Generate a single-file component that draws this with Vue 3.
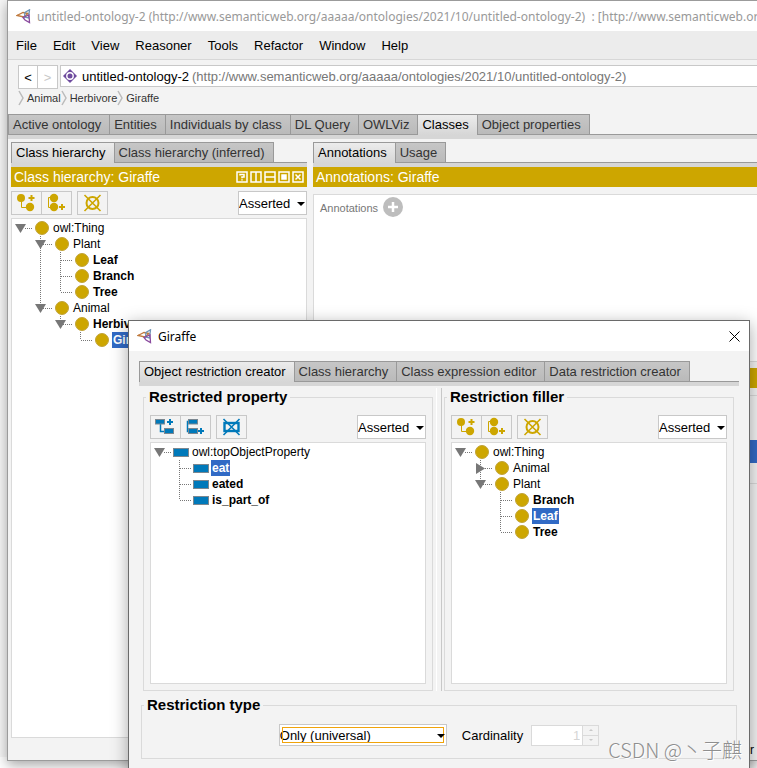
<template>
  <div class="desktop">
    <section class="window">
      <header class="title-bar inactive">
        <svg class="logo" viewBox="0 0 15 15">
          <path d="M1 6.5 L7 3.5 L12 4.5 L8 8 Z" stroke="#c07a3e" />
          <path d="M13.5 .8 L9 3.5 L8.5 8 L12.5 9 Z" stroke="#6c93b5" />
          <path d="M13.5 13.5 L13 6 L7 8.5 L9 11 Z" stroke="#8a4a9e" />
        </svg>
        <span>untitled-ontology-2 (http://www.semanticweb.org/aaaaa/ontologies/2021/10/untitled-ontology-2) &nbsp;: [http://www.semanticweb.org</span>
      </header>

      <nav class="menu-bar">
        <button v-for="item in menu" :key="item" type="button">{{ item }}</button>
      </nav>

      <div class="location">
        <div class="history">
          <button type="button" aria-label="Back">&lt;</button>
          <button type="button" aria-label="Forward" disabled>&gt;</button>
        </div>
        <div class="address">
          <svg width="14" height="14" viewBox="0 0 14 14">
            <path d="M7 0 L14 7 L7 14 L0 7 Z" fill="#6e4b9e" />
            <circle cx="7" cy="7" r="3.2" fill="none" stroke="#fff" stroke-width="1.4" />
          </svg>
          <span class="address-name">untitled-ontology-2</span>
          <span class="address-iri">(http://www.semanticweb.org/aaaaa/ontologies/2021/10/untitled-ontology-2)</span>
        </div>
      </div>

      <div class="crumbs">
        <a v-for="crumb in crumbs" :key="crumb" href="#">
          <svg width="7" height="16" viewBox="0 0 7 16"><path d="M1 1 L5 8 L1 15" /></svg>{{ crumb }}
        </a>
      </div>

      <div class="tab-strip">
        <div class="tabs" role="tablist">
          <button v-for="tab in mainTabs" :key="tab" type="button" role="tab" :class="{ active: tab === 'Classes' }">{{ tab }}</button>
        </div>
      </div>

      <main class="workspace">
        <section class="panel panel-left">
          <div class="tab-strip">
            <div class="tabs" role="tablist">
              <button type="button" role="tab" class="active">Class hierarchy</button>
              <button type="button" role="tab">Class hierarchy (inferred)</button>
            </div>
          </div>
          <h2 class="view-title">
            <span>Class hierarchy: Giraffe</span>
            <svg width="68" height="12" viewBox="0 0 68 12" fill="none" stroke="#fff" stroke-width="1.5">
              <path v-for="n in 5" :key="n" :d="`M${n * 14 - 13} 1 h10 v10 h-10 Z`" />
              <path d="M4 4.5 V3.5 H8 V6 H6 V7.2 M6 8.2 V9.5 M20 1 V11 M29 6 H39" />
              <rect x="46" y="4" width="4" height="4" fill="#fff" />
              <path d="M59.5 3.5 L64.5 8.5 M64.5 3.5 L59.5 8.5" />
            </svg>
          </h2>
          <div class="tools">
            <button v-for="tool in classTools" :key="tool.label" type="button" class="tool class-tool" :aria-label="tool.label">
              <svg width="29" height="22" viewBox="1 1 29 22" v-html="tool.icon"></svg>
            </button>
            <span class="combo combo-small">
              <select aria-label="Class hierarchy mode"><option>Asserted</option></select>
            </span>
          </div>
          <ul class="tree tree-main">
            <li v-for="(row, i) in classTree" :key="i">
              <svg v-for="(cell, c) in row.cells" :key="c" class="guide" width="20" height="16" viewBox="0 0 20 16">
                <path class="dots" :d="guides[cell]" />
                <path v-if="c === row.cells.length - 1 && row.handle" :d="handles[row.handle]" />
              </svg>
              <span class="node-icon class-icon"></span>
              <span class="label" :class="{ bold: row.bold, selected: row.selected }">{{ row.text }}</span>
            </li>
          </ul>
        </section>

        <section class="panel panel-right">
          <div class="tab-strip">
            <div class="tabs" role="tablist">
              <button type="button" role="tab" class="active">Annotations</button>
              <button type="button" role="tab">Usage</button>
            </div>
          </div>
          <h2 class="view-title">Annotations: Giraffe</h2>
          <div class="annotations">
            <span>Annotations</span>
            <button type="button" class="add" aria-label="Add annotation">
              <svg width="20" height="20" viewBox="0 0 20 20">
                <circle cx="10" cy="10" r="10" fill="#bdbdbd" />
                <path d="M10 5 V15 M5 10 H15" stroke="#fff" stroke-width="2.5" />
              </svg>
            </button>
          </div>
          <div class="view-title description-title"></div>
          <div class="description"><div class="description-row"></div></div>
        </section>
      </main>
      <footer class="status">r</footer>
    </section>

    <section class="dialog" role="dialog" aria-labelledby="dialog-title">
      <header class="title-bar">
        <svg class="logo" viewBox="0 0 15 15">
          <path d="M1 6.5 L7 3.5 L12 4.5 L8 8 Z" stroke="#c07a3e" />
          <path d="M13.5 .8 L9 3.5 L8.5 8 L12.5 9 Z" stroke="#6c93b5" />
          <path d="M13.5 13.5 L13 6 L7 8.5 L9 11 Z" stroke="#8a4a9e" />
        </svg>
        <span id="dialog-title">Giraffe</span>
        <button type="button" class="close" aria-label="Close">
          <svg width="11" height="11" viewBox="0 0 11 11"><path d="M.5 .5 L10.5 10.5 M10.5 .5 L.5 10.5" /></svg>
        </button>
      </header>

      <div class="dialog-body">
        <div class="tab-strip">
          <div class="tabs" role="tablist">
            <button v-for="(tab, i) in dialogTabs" :key="tab" type="button" role="tab" :class="{ active: i === 0 }">{{ tab }}</button>
          </div>
        </div>

        <div class="split">
          <fieldset v-for="pane in panes" :key="pane.title" class="group pane">
            <legend>{{ pane.title }}</legend>
            <div class="tools">
              <button v-for="tool in pane.tools" :key="tool.label" type="button" class="tool" :class="pane.kind + '-tool'" :aria-label="tool.label">
                <svg width="29" height="22" viewBox="1 1 29 22" v-html="tool.icon"></svg>
              </button>
              <span class="combo combo-small">
                <select :aria-label="pane.title + ' mode'"><option>Asserted</option></select>
              </span>
            </div>
            <ul class="tree">
              <li v-for="(row, i) in pane.tree" :key="i">
                <svg v-for="(cell, c) in row.cells" :key="c" class="guide" width="20" height="16" viewBox="0 0 20 16">
                  <path class="dots" :d="guides[cell]" />
                  <path v-if="c === row.cells.length - 1 && row.handle" :d="handles[row.handle]" />
                </svg>
                <span class="node-icon" :class="pane.kind + '-icon'"></span>
                <span class="label" :class="{ bold: row.bold, selected: row.selected }">{{ row.text }}</span>
              </li>
            </ul>
          </fieldset>
        </div>

        <fieldset class="group type-group">
          <legend>Restriction type</legend>
          <div class="type-row">
            <span class="combo combo-focus">
              <select aria-label="Restriction type"><option>Only (universal)</option></select>
            </span>
            <label for="cardinality">Cardinality</label>
            <span class="spinner">
              <input id="cardinality" type="text" value="1" disabled />
              <span class="spinner-buttons">
                <button type="button" aria-label="Increase" disabled>
                  <svg width="4" height="2" viewBox="0 0 4 2"><path d="M0 2 L2 0 L4 2 Z" /></svg>
                </button>
                <button type="button" aria-label="Decrease" disabled>
                  <svg width="4" height="2" viewBox="0 0 4 2"><path d="M0 0 L2 2 L4 0 Z" /></svg>
                </button>
              </span>
            </span>
          </div>
        </fieldset>
      </div>
    </section>

    <div class="watermark">CSDN @丶子麒</div>
  </div>
</template>

<script setup>
const menu = ["File", "Edit", "View", "Reasoner", "Tools", "Refactor", "Window", "Help"];
const crumbs = ["Animal", "Herbivore", "Giraffe"];
const mainTabs = ["Active ontology", "Entities", "Individuals by class", "DL Query", "OWLViz", "Classes", "Object properties"];
const dialogTabs = ["Object restriction creator", "Class hierarchy", "Class expression editor", "Data restriction creator"];

// dotted connector shapes, one per 20px tree column
const guides = {
  blank: "",
  root: "M13 8.5 H20",
  line: "M8.5 0 V16",
  tee: "M8.5 0 V16 M9 8.5 H20",
  elbow: "M8.5 0 V8 M9 8.5 H20"
};

const handles = {
  open: "M3 4 H14 L8.5 13 Z",
  closed: "M4 3 L13 8.5 L4 14 Z"
};

const classTree = [
  { text: "owl:Thing", cells: ["root"], handle: "open" },
  { text: "Plant", cells: ["blank", "tee"], handle: "open" },
  { text: "Leaf", cells: ["blank", "line", "tee"], bold: true },
  { text: "Branch", cells: ["blank", "line", "tee"], bold: true },
  { text: "Tree", cells: ["blank", "line", "elbow"], bold: true },
  { text: "Animal", cells: ["blank", "elbow"], handle: "open" },
  { text: "Herbivore", cells: ["blank", "blank", "elbow"], handle: "open", bold: true },
  { text: "Giraffe", cells: ["blank", "blank", "blank", "elbow"], bold: true, selected: true }
];

const propertyTree = [
  { text: "owl:topObjectProperty", cells: ["root"], handle: "open" },
  { text: "eat", cells: ["blank", "tee"], bold: true, selected: true },
  { text: "eated", cells: ["blank", "tee"], bold: true },
  { text: "is_part_of", cells: ["blank", "elbow"], bold: true }
];

const fillerTree = [
  { text: "owl:Thing", cells: ["root"], handle: "open" },
  { text: "Animal", cells: ["blank", "tee"], handle: "closed" },
  { text: "Plant", cells: ["blank", "elbow"], handle: "open" },
  { text: "Branch", cells: ["blank", "blank", "tee"], bold: true },
  { text: "Leaf", cells: ["blank", "blank", "tee"], bold: true, selected: true },
  { text: "Tree", cells: ["blank", "blank", "elbow"], bold: true }
];

const classTools = [
  {
    label: "Add subclass",
    icon: `<path d="M10.5 7 V16.5 H18" fill="none" stroke="currentColor" />
      <circle cx="10" cy="7" r="4" /><circle cx="19" cy="16" r="4.2" />
      <path d="M20.5 4 V10 M17.5 7 H23.5" stroke="currentColor" stroke-width="2" />`
  },
  {
    label: "Add sibling class",
    icon: `<path d="M13 6.5 H7.5 V16.5 H13" fill="none" stroke="currentColor" />
      <circle cx="13" cy="7" r="4.2" /><circle cx="13" cy="16" r="4.2" />
      <path d="M21 13 V19 M18 16 H24" stroke="currentColor" stroke-width="2" />`
  },
  {
    label: "Delete class",
    icon: `<circle cx="15.5" cy="12" r="6" fill="none" stroke="currentColor" stroke-width="2" />
      <path d="M7.5 4 L23.5 20 M23.5 4 L7.5 20" stroke="currentColor" stroke-width="1.6" />`
  }
];

const propertyTools = [
  {
    label: "Add sub property",
    icon: `<path d="M10.5 9 V16.5 H14" fill="none" stroke="currentColor" stroke-width="1.5" />
      <rect x="5.5" y="4.5" width="9" height="4.5" stroke="#7b8790" /><rect x="14.5" y="13.5" width="9" height="5" stroke="#7b8790" />
      <path d="M20 4 V10 M17 7 H23" stroke="currentColor" stroke-width="2" />`
  },
  {
    label: "Add sibling property",
    icon: `<path d="M9 6.5 H7.5 V16.5 H9" fill="none" stroke="currentColor" stroke-width="1.5" />
      <rect x="8.5" y="4.5" width="9" height="4.5" stroke="#7b8790" /><rect x="8.5" y="13.5" width="9" height="5" stroke="#7b8790" />
      <path d="M21 13 V19 M18 16 H24" stroke="currentColor" stroke-width="2" />`
  },
  {
    label: "Delete property",
    icon: `<rect x="8.5" y="8" width="14" height="8" fill="none" stroke="currentColor" stroke-width="2.4" />
      <path d="M7.5 4 L23.5 20 M23.5 4 L7.5 20" stroke="currentColor" stroke-width="1.6" />`
  }
];

const panes = [
  { title: "Restricted property", kind: "property", tools: propertyTools, tree: propertyTree },
  { title: "Restriction filler", kind: "class", tools: classTools, tree: fillerTree }
];
</script>

<style>
body {
  margin: 0;
}
</style>

<style scoped>
.desktop {
  position: relative;
  box-sizing: border-box;
  height: 100vh;
  padding: 0 0 7px 7px;
  overflow: hidden;
  background: linear-gradient(#f6f6f6 calc(100% - 11px), #fff calc(100% - 11px));
  font-family: "Liberation Sans", Arial, "Noto Sans CJK SC", sans-serif;
  font-size: 13px;
  color: #000;
}

.desktop *,
.desktop *::before,
.desktop *::after {
  box-sizing: border-box;
}

button,
select,
input {
  margin: 0;
  padding: 0;
  border: 0;
  border-radius: 0;
  background: none;
  font: inherit;
  color: inherit;
}

.window {
  display: flex;
  flex-direction: column;
  height: 100%;
  border: 1px solid #9b9b9b;
  border-right: 0;
  background: #f3f3f3;
  box-shadow: 0 4px 12px rgba(0, 0, 0, 0.35);
}

.title-bar {
  display: flex;
  flex: none;
  align-items: center;
  height: 30px;
  padding: 0 9px 0 8px;
  background: #fff;
  font-family: "Noto Sans", "Open Sans", sans-serif;
  font-size: 12px;
  white-space: nowrap;
  overflow: hidden;
}

.title-bar.inactive {
  padding-right: 0;
  color: #999;
}

.logo {
  flex: none;
  width: 15px;
  height: 15px;
  margin-right: 6px;
  fill: none;
  stroke-width: 1.3;
}

.menu-bar {
  display: flex;
  flex: none;
  gap: 16px;
  height: 29px;
  padding-left: 8px;
  border-bottom: 1px solid #d7d7d7;
  background: #ececec;
}

.location {
  display: flex;
  align-items: flex-start;
  gap: 2px;
  padding: 5px 0 0 10px;
}

.history {
  display: flex;
}

.history button {
  width: 20px;
  height: 24px;
  border: 1px solid #c8c8c8;
  background: #fff;
}

.history button:disabled {
  color: #c8c8c8;
  border-left: 0;
}

.address {
  display: flex;
  flex: 1;
  align-items: center;
  height: 22px;
  padding-left: 2px;
  border: 1px solid #c8c8c8;
  border-right: 0;
  background: #fff;
  white-space: nowrap;
}

.address-name {
  margin: 0 3px 0 5px;
}

.address-iri {
  color: #777;
}

.crumbs {
  display: flex;
  height: 18px;
  margin-bottom: 7px;
  padding-left: 10px;
  font-size: 11px;
}

.crumbs a {
  display: flex;
  align-items: center;
  gap: 2px;
  color: #333;
  text-decoration: none;
}

.crumbs path {
  fill: none;
  stroke: #bbb;
  stroke-width: 1.5;
}

.tab-strip {
  flex: none;
  border-bottom: 4px solid #d6d6d6;
}

.tabs {
  display: flex;
  height: 21px;
  border-bottom: 1px solid #999;
}

.tabs button {
  height: 20px;
  padding: 0 8px 0 4px;
  border: 1px solid #999;
  border-width: 1px 0 0 1px;
  background: linear-gradient(#c6c6c6, #bababa);
  color: #333;
  white-space: nowrap;
}

.tabs button:last-child {
  border-right-width: 1px;
}

.tabs button.active {
  height: 21px;
  padding-bottom: 1px;
  background: linear-gradient(#ececec, #d6d6d6);
  color: #000;
}

.workspace {
  display: flex;
  flex: 1;
  gap: 6px;
  min-height: 0;
  padding: 3px 0 0 3px;
}

.panel {
  display: flex;
  flex-direction: column;
}

.panel-left {
  flex: none;
  width: 296px;
}

.panel-right {
  flex: 1;
  min-width: 0;
}

.view-title {
  display: flex;
  flex: none;
  align-items: center;
  justify-content: space-between;
  height: 20px;
  margin: 0;
  padding: 0 3px;
  background: #cda600;
  font-size: 14px;
  font-weight: normal;
  color: #fff;
}

.tools {
  display: flex;
  height: 24px;
  margin: 4px 0 3px;
}

.tool {
  display: flex;
  width: 31px;
  height: 24px;
  border: 1px solid #c8c8c8;
}

.tool + .tool {
  margin-left: -1px;
}

.tool:nth-child(3) {
  margin-left: 5px;
}

.class-tool {
  color: #cda600;
}

.property-tool {
  color: #0079ba;
}

.tool svg {
  fill: currentColor;
}

.combo {
  position: relative;
  height: 24px;
}

.combo select {
  width: 100%;
  height: 100%;
  border: 1px solid #c8c8c8;
  background: #fff;
  appearance: none;
}

.combo::after {
  content: "";
  position: absolute;
  top: 50%;
  right: 2px;
  border: 4px solid transparent;
  border-top-color: #000;
  border-bottom: 0;
  margin-top: -1px;
  pointer-events: none;
}

.combo-small {
  width: 69px;
  margin-left: auto;
}

.tree {
  margin: 0;
  padding: 1px 0;
  border: 1px solid #dadada;
  background: #fff;
  font-size: 12px;
  line-height: 16px;
  list-style: none;
}

.tree-main {
  flex: 1;
}

.tree li {
  display: flex;
  align-items: center;
  height: 16px;
}

.guide {
  flex: none;
  fill: #777;
}

.dots {
  fill: none;
  stroke: #777;
  stroke-dasharray: 1 1;
}

.node-icon {
  flex: none;
}

.class-icon {
  width: 14px;
  height: 14px;
  margin: 0 3px;
  border: 1px solid #c1a338;
  border-radius: 50%;
  background: #cda600;
}

.property-icon {
  width: 16px;
  height: 9px;
  margin: 0 2px;
  border: 1px solid #7b8790;
  background: #0079ba;
}

.label {
  padding: 0 1px;
}

.bold {
  font-weight: bold;
}

.selected {
  background: #316ac5;
  color: #fff;
}

.annotations {
  display: flex;
  align-items: flex-start;
  gap: 5px;
  height: 168px;
  margin: 7px 0 6px;
  padding: 2px 6px;
  border: 1px solid #dadada;
  border-right: 0;
  background: #fff;
  font-size: 11px;
  line-height: 22px;
  color: #777;
}

.add {
  display: flex;
}

.description {
  height: 89px;
  margin-top: 7px;
  padding-top: 44px;
  border: 1px solid #dadada;
  border-right: 0;
}

.description-row {
  height: 23px;
  background: #316ac5;
}

.status {
  flex: none;
  height: 22px;
  padding-right: 3px;
  font-size: 12px;
  line-height: 24px;
  text-align: right;
}

.dialog {
  position: absolute;
  top: 320px;
  right: 7px;
  left: 128px;
  height: 500px;
  border: 1px solid #6a6a6a;
  background: #f3f3f3;
  box-shadow: 0 4px 16px rgba(0, 0, 0, 0.35);
}

.close {
  display: flex;
  margin-left: auto;
}

.close path {
  fill: none;
  stroke: #000;
}

.dialog-body {
  padding: 10px 10px 0;
}

.split {
  display: grid;
  grid-template-columns: 1fr 1fr;
  gap: 11px;
  margin-top: 2px;
  padding: 0 5px 0 4px;
  background: linear-gradient(90deg, #fff 1px, #f3f3f3 1px, #f3f3f3 5px, #c8c8c8 5px) 50% 0 / 6px 100% no-repeat;
}

.group {
  min-width: 0;
  margin: 0;
  padding: 0 6px 6px;
  border: 1px solid #dadada;
}

.group legend {
  margin-left: -4px;
  padding: 0 3px;
  font-size: 15px;
  font-weight: bold;
  line-height: 18px;
}

.pane .tools {
  margin-top: 9px;
}

.pane .tree {
  height: 242px;
}

.type-group {
  margin: 5px 2px 0;
}

.type-row {
  display: flex;
  align-items: center;
  justify-content: center;
  height: 38px;
  padding-top: 4px;
}

.combo-focus {
  width: 168px;
  height: 22px;
}

.combo-focus::before {
  content: "";
  position: absolute;
  inset: 3px;
  border: 1px solid #f0a30a;
  pointer-events: none;
}

.type-row label {
  margin: 0 8px 0 15px;
}

.spinner {
  display: flex;
  width: 68px;
  height: 21px;
  border: 1px solid #dadada;
}

.spinner input {
  flex: 1;
  min-width: 0;
  padding-right: 2px;
  background: #fff;
  text-align: right;
  color: #d5d5d5;
}

.spinner-buttons {
  display: flex;
  flex-direction: column;
  width: 16px;
  border-left: 1px solid #dadada;
}

.spinner-buttons button {
  display: flex;
  flex: 1;
  align-items: center;
  justify-content: center;
}

.spinner-buttons button + button {
  border-top: 1px solid #dadada;
}

.spinner-buttons path {
  fill: #c8c8c8;
}

.watermark {
  position: absolute;
  right: 15px;
  bottom: 4px;
  font-family: "Noto Sans CJK SC", sans-serif;
  font-size: 20px;
  font-weight: 300;
  line-height: 28px;
  color: #8f8f8f;
  text-shadow: 1px 1px 0 #fff;
}
</style>
